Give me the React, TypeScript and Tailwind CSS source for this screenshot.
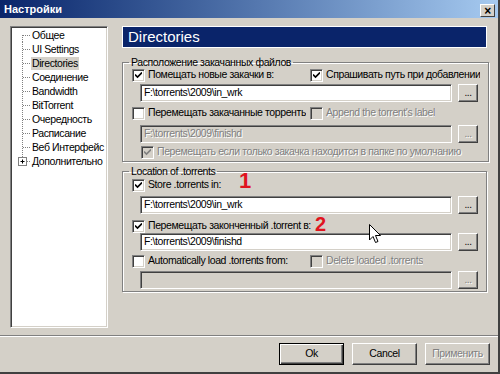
import React from "react";

const disabledText = "text-[#808080] [text-shadow:1px_1px_0_#ffffff]";

const Check = ({ checked = false, disabled = false }: { checked?: boolean; disabled?: boolean }) => (
  <span
    className={`inline-flex w-[13px] h-[13px] shrink-0 items-center justify-center border-t border-l border-[#808080] border-b border-r border-b-white border-r-white shadow-[inset_1px_1px_0_#404040,inset_-1px_-1px_0_#d4d0c8] ${
      disabled ? "bg-[#d4d0c8]" : "bg-white"
    }`}
  >
    {checked && (
      <svg width="7" height="7" viewBox="0 0 7 7">
        <path d="M0 2.5 L2.5 5 L7 0.5" fill="none" stroke={disabled ? "#808080" : "#000"} strokeWidth="1.6" />
      </svg>
    )}
  </span>
);

const CheckRow = ({
  label,
  checked,
  disabled,
  className = "",
}: {
  label: string;
  checked?: boolean;
  disabled?: boolean;
  className?: string;
}) => (
  <div className={`flex items-center gap-[3px] h-[14px] whitespace-nowrap overflow-hidden ${className}`}>
    <Check checked={checked} disabled={disabled} />
    <span className={disabled ? disabledText : "text-black"}>{label}</span>
  </div>
);

const Browse = ({ disabled = false }: { disabled?: boolean }) => (
  <button
    className={`w-[20px] h-[18px] flex items-end justify-center pb-[3px] border border-t-white border-l-white border-b-[#404040] border-r-[#404040] shadow-[inset_-1px_-1px_0_#808080] bg-[#d4d0c8] text-[10px] leading-none ${
      disabled ? disabledText : "text-black"
    }`}
  >
    ...
  </button>
);

const PathRow = ({ value, disabled = false, className = "" }: { value: string; disabled?: boolean; className?: string }) => (
  <div className={`flex items-center gap-[6px] ml-[8px] ${className}`}>
    <div
      className={`w-[312px] h-[18px] flex items-center px-[3px] border-t border-l border-[#808080] border-b border-r border-b-white border-r-white shadow-[inset_1px_1px_0_#404040,inset_-1px_-1px_0_#d4d0c8] ${
        disabled ? `bg-[#d4d0c8] ${disabledText}` : "bg-white text-black"
      }`}
    >
      {value}
    </div>
    <Browse disabled={disabled} />
  </div>
);

const Group = ({ title, className = "", children }: { title: string; className?: string; children: React.ReactNode }) => (
  <fieldset className={`border border-[#808080] shadow-[inset_1px_1px_0_#ffffff,1px_1px_0_#ffffff] ${className}`}>
    <legend className="ml-[6px] px-[2px] leading-[12px]">{title}</legend>
    <div className="pl-[9px] pr-[8px] pb-[2px]">{children}</div>
  </fieldset>
);

const treeItems = [
  "Общее",
  "UI Settings",
  "Directories",
  "Соединение",
  "Bandwidth",
  "BitTorrent",
  "Очередность",
  "Расписание",
  "Веб Интерфейс",
];

const Connector = ({ first = false }: { first?: boolean }) => (
  <svg width="19" height="14" className="shrink-0">
    <line x1="10.5" y1={first ? 7 : 0} x2="10.5" y2="14" stroke="#808080" strokeDasharray="1 1" />
    <line x1="11" y1="7.5" x2="19" y2="7.5" stroke="#808080" strokeDasharray="1 1" />
  </svg>
);

const Tree = () => (
  <div className="w-[98px] h-[302px] bg-white border-t border-l border-[#808080] border-b border-r border-b-white border-r-white shadow-[inset_1px_1px_0_#404040,inset_-1px_-1px_0_#d4d0c8] pt-[1px] pl-[1px] overflow-hidden">
    {treeItems.map((item, i) => (
      <div key={item} className="flex items-center h-[14px] whitespace-nowrap">
        <Connector first={i === 0} />
        <span className={`px-[1px] leading-[13px] ${item === "Directories" ? "bg-[#d4d0c8]" : ""}`}>{item}</span>
      </div>
    ))}
    <div className="flex items-center h-[14px] whitespace-nowrap">
      <svg width="19" height="14" className="shrink-0">
        <line x1="10.5" y1="0" x2="10.5" y2="3" stroke="#808080" strokeDasharray="1 1" />
        <rect x="6.5" y="3.5" width="8" height="8" fill="#fff" stroke="#808080" />
        <line x1="8.5" y1="7.5" x2="12.5" y2="7.5" stroke="#000" />
        <line x1="10.5" y1="5.5" x2="10.5" y2="9.5" stroke="#000" />
        <line x1="15" y1="7.5" x2="19" y2="7.5" stroke="#808080" strokeDasharray="1 1" />
      </svg>
      <span className="px-[1px] leading-[13px]">Дополнительно</span>
    </div>
  </div>
);

const DialogButton = ({ label, isDefault = false, disabled = false }: { label: string; isDefault?: boolean; disabled?: boolean }) => (
  <button
    className={`w-[65px] h-[22px] bg-[#d4d0c8] border ${
      isDefault ? "border-black" : "border-t-white border-l-white border-b-[#404040] border-r-[#404040]"
    } ${
      isDefault
        ? "shadow-[inset_1px_1px_0_#ffffff,inset_-1px_-1px_0_#404040,inset_-2px_-2px_0_#808080]"
        : "shadow-[inset_-1px_-1px_0_#808080]"
    } ${disabled ? disabledText : "text-black"}`}
  >
    {label}
  </button>
);

export default function App() {
  return (
    <div className="relative w-[500px] h-[374px] bg-[#d4d0c8] flex flex-col font-['Liberation_Sans',Arial,sans-serif] text-[10.5px] tracking-[-0.4px] text-black border-r-2 border-b-2 border-r-[#404040] border-b-[#404040]">
      {/* title bar */}
      <div className="h-[18px] flex items-center justify-between pl-[4px] pr-[3px] bg-gradient-to-r from-[#0a246a] to-[#a6caf0] shrink-0">
        <span className="text-white font-bold text-[11px] tracking-normal">Настройки</span>
        <span className="w-[15px] h-[13px] mt-[3px] flex items-center justify-center bg-[#d4d0c8] border border-t-white border-l-white border-b-[#404040] border-r-[#404040] text-[12px] font-bold leading-none">
          ×
        </span>
      </div>

      <div className="flex gap-[14px] pl-[10px] pt-[8px]">
        <Tree />

        <div className="w-[365px] flex flex-col">
          <div className="h-[22px] bg-[#0a246a] border border-white flex items-center pl-[5px] text-white text-[15px] tracking-normal">
            Directories
          </div>

          <Group title="Расположение закачанных файлов" className="mt-[8px]">
            <div className="flex">
              <CheckRow label="Помещать новые закачки в:" checked className="w-[178px]" />
              <CheckRow label="Спрашивать путь при добавлении" checked />
            </div>
            <PathRow value="F:\torrents\2009\in_wrk" className="mt-[2px]" />
            <div className="flex mt-[4px]">
              <CheckRow label="Перемещать закачанные торренты в:" className="w-[174px] mr-[4px]" />
              <CheckRow label="Append the torrent's label" disabled />
            </div>
            <PathRow value="F:\torrents\2009\finishd" disabled className="mt-[5px]" />
            <CheckRow
              label="Перемещать если только закачка находится в папке по умолчанию"
              checked
              disabled
              className="mt-[2px] ml-[9px]"
            />
          </Group>

          <Group title="Location of .torrents" className="mt-[3px]">
            <CheckRow label="Store .torrents in:" checked className="mt-[1px]" />
            <PathRow value="F:\torrents\2009\in_wrk" className="mt-[4px]" />
            <CheckRow label="Перемещать законченный .torrent в:" checked className="mt-[5px]" />
            <PathRow value="F:\torrents\2009\finishd" />
            <div className="flex mt-[3px]">
              <CheckRow label="Automatically load .torrents from:" className="w-[178px]" />
              <CheckRow label="Delete loaded .torrents" disabled />
            </div>
            <PathRow value="" disabled className="mt-[3px]" />
          </Group>
        </div>
      </div>

      <div className="mt-[7px] border-t border-t-[#808080] border-b border-b-white" />

      <div className="flex justify-end gap-[8px] pr-[8px] mt-[6px]">
        <DialogButton label="Ok" isDefault />
        <DialogButton label="Cancel" />
        <DialogButton label="Применить" disabled />
      </div>

      {/* annotations over the screenshot */}
      <span className="absolute left-[239px] top-[170px] text-[22px] font-bold text-[#e0141e] leading-none tracking-normal">1</span>
      <span className="absolute left-[315px] top-[214px] text-[20px] font-bold text-[#e0141e] leading-none tracking-normal">2</span>
      <svg className="absolute left-[369px] top-[224px]" width="13" height="20" viewBox="0 0 13 20">
        <path d="M0.5 0.5 L0.5 16 L4 12.5 L6.5 18.5 L9 17.5 L6.5 11.5 L11.5 11.5 Z" fill="#fff" stroke="#000" strokeWidth="1" />
      </svg>
    </div>
  );
}
